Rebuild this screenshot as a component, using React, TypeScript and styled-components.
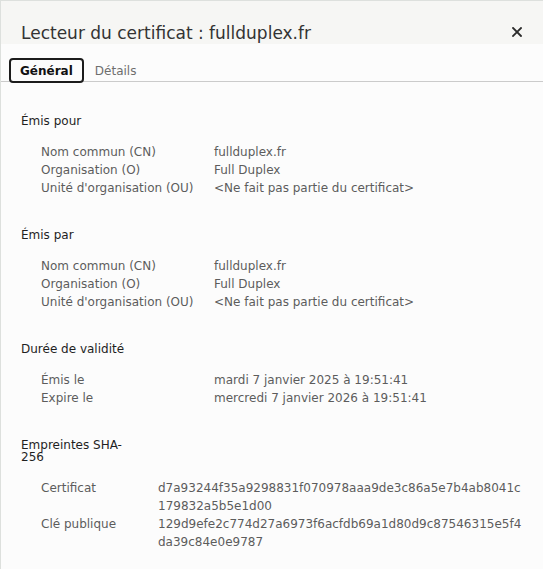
import React from "react";
import styled, { createGlobalStyle } from "styled-components";

const Global = createGlobalStyle`
  html, body { margin: 0; padding: 0; background: #fcfcfc; }
  body { font-family: "DejaVu Sans", "Liberation Sans", sans-serif; }
  * { box-sizing: border-box; }
`;

const Window = styled.div`
  width: 543px;
  height: 569px;
  border-top: 1px solid #dde0dd;
  border-left: 1px solid #dde0dd;
  background: #fcfcfc;
  overflow: hidden;
`;

const Header = styled.div`
  height: 43px;
  background: #f6f6f4;
  display: flex;
  align-items: flex-start;
  padding: 22px 21px 0 20px;
`;

const Title = styled.h1`
  margin: 0;
  font-size: 17px;
  font-weight: 400;
  line-height: 20px;
  color: #333;
  flex: 1;
`;

const Close = styled.button`
  border: 0;
  background: none;
  padding: 0;
  margin-top: 4px;
  width: 10px;
  height: 10px;
  display: flex;
  cursor: pointer;
`;

const TabBar = styled.div`
  display: flex;
  padding: 14px 0 0 8px;
  border-bottom: 1px solid #cbcbcb;
  height: 38px;
`;

const Tab = styled.div<{ $active?: boolean }>`
  height: 25px;
  padding: 0 9px;
  display: flex;
  align-items: center;
  font-size: 12px;
  border: 2px solid ${(p) => (p.$active ? "#1c1c1c" : "transparent")};
  border-radius: 4px;
  font-weight: ${(p) => (p.$active ? 700 : 400)};
  color: ${(p) => (p.$active ? "#111" : "#6e6e6e")};
  background: ${(p) => (p.$active ? "#fcfcfc" : "transparent")};
  position: relative;
`;

const Content = styled.div`
  padding: 33px 20px 0 20px;
  display: flex;
  flex-direction: column;
  gap: 32px;
`;

const Section = styled.section`
  display: flex;
  flex-direction: column;
  gap: 16px;
`;

const Heading = styled.h2`
  margin: 0;
  max-width: 115px;
  font-size: 12px;
  font-weight: 400;
  line-height: 12px;
  color: #1f1f1f;
`;

const Grid = styled.div<{ $labelWidth: number }>`
  display: grid;
  grid-template-columns: ${(p) => p.$labelWidth}px 366px;
  padding-left: 20px;
  font-size: 12px;
  line-height: 18px;
  color: #5c5c5c;
`;

const Label = styled.div``;

const Value = styled.div`
  word-break: break-all;
`;

type Row = [string, string];

const sections: { title: string; labelWidth: number; rows: Row[] }[] = [
  {
    title: "Émis pour",
    labelWidth: 173,
    rows: [
      ["Nom commun (CN)", "fullduplex.fr"],
      ["Organisation (O)", "Full Duplex"],
      ["Unité d'organisation (OU)", "<Ne fait pas partie du certificat>"],
    ],
  },
  {
    title: "Émis par",
    labelWidth: 173,
    rows: [
      ["Nom commun (CN)", "fullduplex.fr"],
      ["Organisation (O)", "Full Duplex"],
      ["Unité d'organisation (OU)", "<Ne fait pas partie du certificat>"],
    ],
  },
  {
    title: "Durée de validité",
    labelWidth: 173,
    rows: [
      ["Émis le", "mardi 7 janvier 2025 à 19:51:41"],
      ["Expire le", "mercredi 7 janvier 2026 à 19:51:41"],
    ],
  },
  {
    title: "Empreintes SHA-256",
    labelWidth: 117,
    rows: [
      ["Certificat", "d7a93244f35a9298831f070978aaa9de3c86a5e7b4ab8041c179832a5b5e1d00"],
      ["Clé publique", "129d9efe2c774d27a6973f6acfdb69a1d80d9c87546315e5f4da39c84e0e9787"],
    ],
  },
];

export default function App() {
  return (
    <>
      <Global />
      <Window>
        <Header>
          <Title>Lecteur du certificat : fullduplex.fr</Title>
          <Close aria-label="Fermer">
            <svg width="10" height="10" viewBox="0 0 10 10">
              <path d="M1 1 L9 9 M9 1 L1 9" stroke="#2b2b2b" strokeWidth="1.8" strokeLinecap="square" />
            </svg>
          </Close>
        </Header>
        <TabBar>
          <Tab $active>Général</Tab>
          <Tab>Détails</Tab>
        </TabBar>
        <Content>
          {sections.map((s) => (
            <Section key={s.title}>
              <Heading>{s.title}</Heading>
              <Grid $labelWidth={s.labelWidth}>
                {s.rows.map(([l, v]) => (
                  <React.Fragment key={l}>
                    <Label>{l}</Label>
                    <Value>{v}</Value>
                  </React.Fragment>
                ))}
              </Grid>
            </Section>
          ))}
        </Content>
      </Window>
    </>
  );
}
